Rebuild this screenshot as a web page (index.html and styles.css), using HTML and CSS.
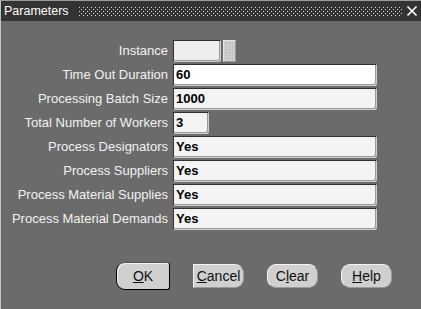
FILE: index.html
```html
<!DOCTYPE html>
<html lang="en">

<head>
    <meta charset="UTF-8">
    <title>Parameters</title>
    <link rel="stylesheet" href="styles.css">
</head>

<body>
    <div class="window">
        <div class="titleBar">
            <span class="title">Parameters</span>
            <span class="grip"></span>
            <svg class="closeIcon" width="12" height="12" viewBox="0 0 12 12">
                <path d="M1.5 1.5 L10.5 10.5 M10.5 1.5 L1.5 10.5" stroke="#fff" stroke-width="1.6" fill="none"/>
            </svg>
        </div>
        <div class="paramForm">
            <label>Instance</label>
            <div class="lovRow"><span class="field instance"></span><span class="lovButton"></span></div>
            <label>Time Out Duration</label>
            <span class="field current">60</span>
            <label>Processing Batch Size</label>
            <span class="field">1000</span>
            <label>Total Number of Workers</label>
            <span class="field narrow">3</span>
            <label>Process Designators</label>
            <span class="field">Yes</span>
            <label>Process Suppliers</label>
            <span class="field">Yes</span>
            <label>Process Material Supplies</label>
            <span class="field">Yes</span>
            <label>Process Material Demands</label>
            <span class="field">Yes</span>
        </div>
        <div class="buttonRow">
            <button class="formButton default"><u>O</u>K</button>
            <button class="formButton flatLeft"><u>C</u>ancel</button>
            <button class="formButton">C<u>l</u>ear</button>
            <button class="formButton"><u>H</u>elp</button>
        </div>
    </div>
</body>

</html>
```

FILE: styles.css
```css
body { margin: 0; padding: 0; background-color: #6b6b6b; font-family: "Liberation Sans", Arial, sans-serif; }
.window { width: 421px; height: 309px; box-sizing: border-box; background-color: #6b6b6b; border-left: 1px solid #c4c4c4; border-top: 1px solid #9a9a9a; }
.titleBar { height: 20px; background-color: #333333; display: flex; align-items: center; }
.title { color: #fff; font-size: 12.5px; padding-left: 3px; width: 74px; }
.grip {
    width: 324px;
    height: 11px;
    margin-top: 1px;
    background-image:
        radial-gradient(circle at 1.5px 1.5px, #e0e0e0 0.6px, transparent 1px),
        radial-gradient(circle at 3.5px 3.5px, #e0e0e0 0.6px, transparent 1px);
    background-size: 4px 4px;
}
.closeIcon { margin-left: 4px; }

.paramForm {
    display: grid;
    grid-template-columns: 167px 204px;
    grid-auto-rows: 22px;
    column-gap: 5px;
    row-gap: 2px;
    padding-top: 19px;
}
.paramForm label { color: #f2f2f2; font-size: 13px; text-align: right; line-height: 22px; white-space: nowrap; }
.field {
    display: block;
    box-sizing: border-box;
    height: 22px;
    background-color: #f3f3f3;
    border: 1px solid;
    border-color: #303030 #d0d0d0 #d0d0d0 #303030;
    border-radius: 0 1px 3px 1px;
    box-shadow: inset -1px -1px 0 #9a9a9a;
    font-weight: bold;
    font-size: 13px;
    line-height: 20px;
    padding-left: 2px;
    color: #000;
}
.field.current { background-color: #fff; }
.field.narrow { width: 36px; }
.lovRow { display: flex; gap: 2px; }
.field.instance { width: 48px; background-color: #eeeeee; }
.lovButton {
    width: 13px;
    height: 22px;
    box-sizing: border-box;
    background-color: #c4c4c4;
    background-image: radial-gradient(circle at 1px 1px, #e2e2e2 0.5px, transparent 0.9px);
    background-size: 3px 3px;
    border: 1px solid;
    border-color: #e6e6e6 #9a9a9a #9a9a9a #e6e6e6;
}

.buttonRow { display: flex; align-items: center; gap: 23px; padding-left: 115px; padding-top: 32px; }
.formButton {
    width: 51px;
    height: 24px;
    background-color: #d0d0d0;
    border: 1px solid;
    border-color: #f4f4f4 #9a9a9a #9a9a9a #f4f4f4;
    border-radius: 9px;
    font-family: "Liberation Sans", Arial, sans-serif;
    font-size: 14px;
    color: #111;
    padding: 0;
    cursor: pointer;
}
.formButton.default { width: 54px; height: 28px; border: 1px solid #000; border-top-color: #555; border-radius: 9px 3px 3px 9px; box-shadow: inset 1px 1px 0 #f4f4f4; }
.formButton.flatLeft { border-radius: 0 9px 9px 0; }
```
